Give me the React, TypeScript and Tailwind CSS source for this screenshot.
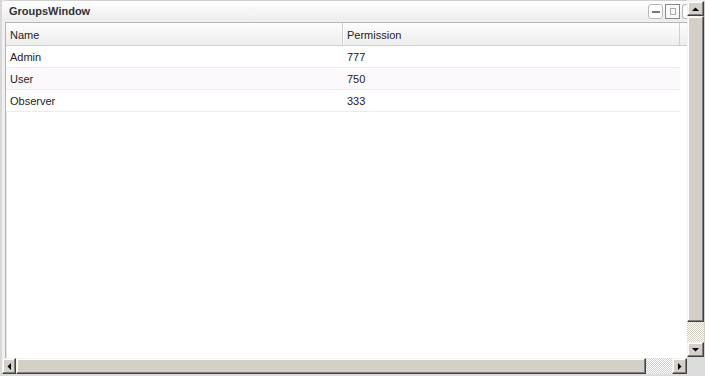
import React from "react";

const bevel =
  "bg-[#d4d0c8] border border-t-[#f4f3f0] border-l-[#f4f3f0] border-r-[#404040] border-b-[#404040] shadow-[inset_-1px_-1px_0_#808080,inset_1px_1px_0_#fff]";
const checker =
  "bg-[repeating-conic-gradient(#d4d0c8_0_25%,#ffffff_0_50%)] bg-[length:2px_2px]";

function Tri({ dir }: { dir: "up" | "down" | "left" | "right" }) {
  const pts =
    dir === "up"
      ? "0,4 7,4 3.5,0.5"
      : dir === "down"
      ? "0,0 7,0 3.5,3.5"
      : dir === "left"
      ? "4,0 4,7 0.5,3.5"
      : "0,0 0,7 3.5,3.5";
  const w = dir === "up" || dir === "down" ? 7 : 4;
  const h = dir === "up" || dir === "down" ? 4 : 7;
  return (
    <svg width={w} height={h} viewBox={`0 0 ${w} ${h}`}>
      <polygon points={pts} fill="#000" />
    </svg>
  );
}

const rows = [
  { name: "Admin", perm: "777", bg: "bg-white" },
  { name: "User", perm: "750", bg: "bg-[#fcf9fc]" },
  { name: "Observer", perm: "333", bg: "bg-white" },
];

export default function App() {
  return (
    <div
      className="w-[705px] h-[376px] flex bg-[#f1f1f1] text-[11px] text-[#222] overflow-hidden"
      style={{ fontFamily: '"Liberation Sans", Arial, sans-serif' }}
    >
      {/* left column */}
      <div className="w-[687px] h-full flex flex-col border-l-2 border-l-[#d8d8d8]">
        {/* title bar */}
        <div className="h-[21px] flex items-center pl-[7px] border-t border-[#d0d0d0] rounded-tl-[3px] bg-gradient-to-b from-[#ffffff] to-[#ececec]">
          <span className="font-bold text-[11px] text-[#333] flex-1 pt-[1px]">GroupsWindow</span>
          <div className="flex items-center gap-[2px] pr-0 mt-[1px]">
            <div className="w-[15px] h-[15px] rounded-[3px] border border-[#b8b8b8] bg-white flex items-center justify-center">
              <div className="w-[8px] h-[2px] bg-[#777]" />
            </div>
            <div className="w-[15px] h-[15px] border border-[#8a8a8a] bg-[#fafafa] flex items-center justify-center">
              <div className="w-[6px] h-[7px] border border-[#aaa]" />
            </div>
            <div className="w-[5px] h-[15px] rounded-l-[3px] border border-r-0 border-[#b8b8b8] bg-white" />
          </div>
        </div>
        {/* content */}
        <div className="flex-1 flex flex-col pl-[3px] pt-[1px] min-h-0">
          <div className="flex-1 flex flex-col border-l border-t border-[#b4b4b4] bg-white min-h-0 shadow-[inset_1px_0_0_#e4e4e4]">
            {/* header */}
            <div className="h-[23px] flex border-b border-[#cfcfcf] bg-gradient-to-b from-[#fdfdfd] to-[#eeeeee]">
              <div className="w-[337px] flex items-center pl-[4px] pt-[2px] border-r border-[#cfcfcf] shadow-[1px_0_0_#fff]">
                Name
              </div>
              <div className="w-[337px] flex items-center pl-[4px] pt-[2px] border-r border-[#cfcfcf]">
                Permission
              </div>
              <div className="flex-1" />
            </div>
            {rows.map((r) => (
              <div
                key={r.name}
                className={`h-[22px] flex border-b border-[#ececec] mr-[7px] ${r.bg}`}
              >
                <div className="w-[337px] flex items-center pl-[4px] pt-[2px]">{r.name}</div>
                <div className="flex-1 flex items-center pl-[4px] pt-[2px]">{r.perm}</div>
              </div>
            ))}
          </div>
        </div>
        {/* horizontal scrollbar */}
        <div className="h-[16px] flex bg-[#d4d0c8]">
          <div className={`w-[14px] h-[16px] flex items-center justify-center ${bevel}`}>
            <Tri dir="left" />
          </div>
          <div className={`w-[630px] h-[16px] ${bevel}`} />
          <div className={`flex-1 h-[16px] ${checker}`} />
          <div className={`w-[15px] h-[16px] flex items-center justify-center ${bevel}`}>
            <Tri dir="right" />
          </div>
        </div>
        <div className="h-[2px] bg-[#dcdcdc]" />
      </div>
      {/* vertical scrollbar */}
      <div className="w-[18px] h-full flex flex-col bg-[#d4d0c8]">
        <div className="h-[1px] bg-[#f1f1f1]" />
        <div className={`h-[15px] w-[17px] flex items-center justify-center ${bevel}`}>
          <Tri dir="up" />
        </div>
        <div className={`h-[306px] w-[17px] ${bevel}`} />
        <div className={`flex-1 w-[17px] ${checker}`} />
        <div className={`h-[15px] w-[17px] flex items-center justify-center ${bevel}`}>
          <Tri dir="down" />
        </div>
        <div className="h-[19px] bg-[#dcdcdc]" />
      </div>
    </div>
  );
}
